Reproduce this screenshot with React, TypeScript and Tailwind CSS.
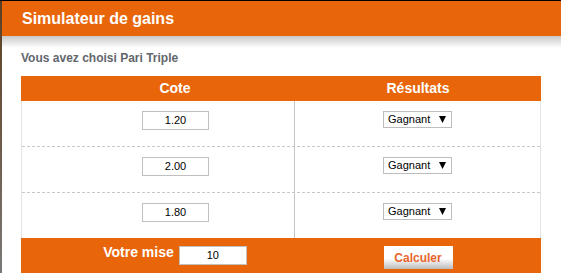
const ORANGE = 'bg-[#e8650a]';

const cotes = ['1.20', '2.00', '1.80'];

const FakeSelect = ({ value }: { value: string }) => (
    <div className="w-[69px] h-[17px] border border-[#bdbdbd] bg-white flex items-center justify-between pl-[4px] pr-[5px] text-[11px] text-black">
        <span>{value}</span>
        <svg width="7" height="7" viewBox="0 0 7 7">
            <polygon points="0,0 7,0 3.5,7" fill="#000" />
        </svg>
    </div>
);

const OddInput = ({ value }: { value: string }) => (
    <div className="w-[67px] h-[19px] border border-[#c0c0c0] bg-white flex items-center justify-center text-[11px] text-black">
        {value}
    </div>
);

const App = () => {
    return (
        <div className="w-[561px] h-[273px] overflow-hidden bg-white font-['Liberation_Sans',Arial,sans-serif]">
            <div className="h-px bg-black" />
            <div className="flex">
                <div className="w-[2px] shrink-0 bg-gradient-to-b from-[#5c3f22] via-[#6e5a48] to-[#7a7a7a]" />
                <div className="flex-1">
                    <div className={`h-[35px] ${ORANGE} flex items-center pl-[20px]`}>
                        <h1 className="text-[16px] font-bold text-white leading-none">Simulateur de gains</h1>
                    </div>
                    <div className="h-[12px] bg-gradient-to-b from-[#c9c9c9] to-white" />

                    <div className="pl-[19px]">
                        <p className="mt-[3px] text-[12px] leading-[14px] font-bold text-[#62666c]">
                            Vous avez choisi Pari Triple
                        </p>

                        <div className="mt-[11px] w-[520px]">
                            <div className={`h-[25px] ${ORANGE} flex text-[14px] font-bold text-white`}>
                                <div className="w-[274px] pl-[34px] flex items-center justify-center">Cote</div>
                                <div className="flex-1 flex items-center justify-center">Résultats</div>
                            </div>

                            <div className="border-x border-[#e3e3e3]">
                                {cotes.map((cote, i) => (
                                    <div
                                        key={cote}
                                        className={
                                            i < cotes.length - 1
                                                ? 'h-[46px] flex border-b border-dashed border-[#c8c8c8]'
                                                : 'h-[45px] flex'
                                        }
                                    >
                                        <div className="w-[273px] pl-[35px] pt-[10px] flex justify-center border-r border-[#c4c4c4]">
                                            <OddInput value={cote} />
                                        </div>
                                        <div className="flex-1 pt-[10px] flex justify-center">
                                            <FakeSelect value="Gagnant" />
                                        </div>
                                    </div>
                                ))}
                            </div>

                            <div className={`h-[40px] ${ORANGE} flex`}>
                                <div className="w-[274px] pl-[34px] pt-[6px] flex justify-center items-start gap-[5px]">
                                    <span className="text-[14px] leading-[16px] font-bold text-white">Votre mise</span>
                                    <div className="mt-[2px] w-[68px] h-[19px] border border-[#c0c0c0] bg-white flex items-center justify-center text-[11px] text-black">
                                        10
                                    </div>
                                </div>
                                <div className="flex-1 pt-[8px] flex justify-center">
                                    <button className="w-[69px] h-[23px] bg-gradient-to-b from-white from-[55%] to-[#bcbcbc] text-[12px] font-bold text-[#e8652c]">
                                        Calculer
                                    </button>
                                </div>
                            </div>
                        </div>
                    </div>
                </div>
            </div>
        </div>
    );
};

export default App;
